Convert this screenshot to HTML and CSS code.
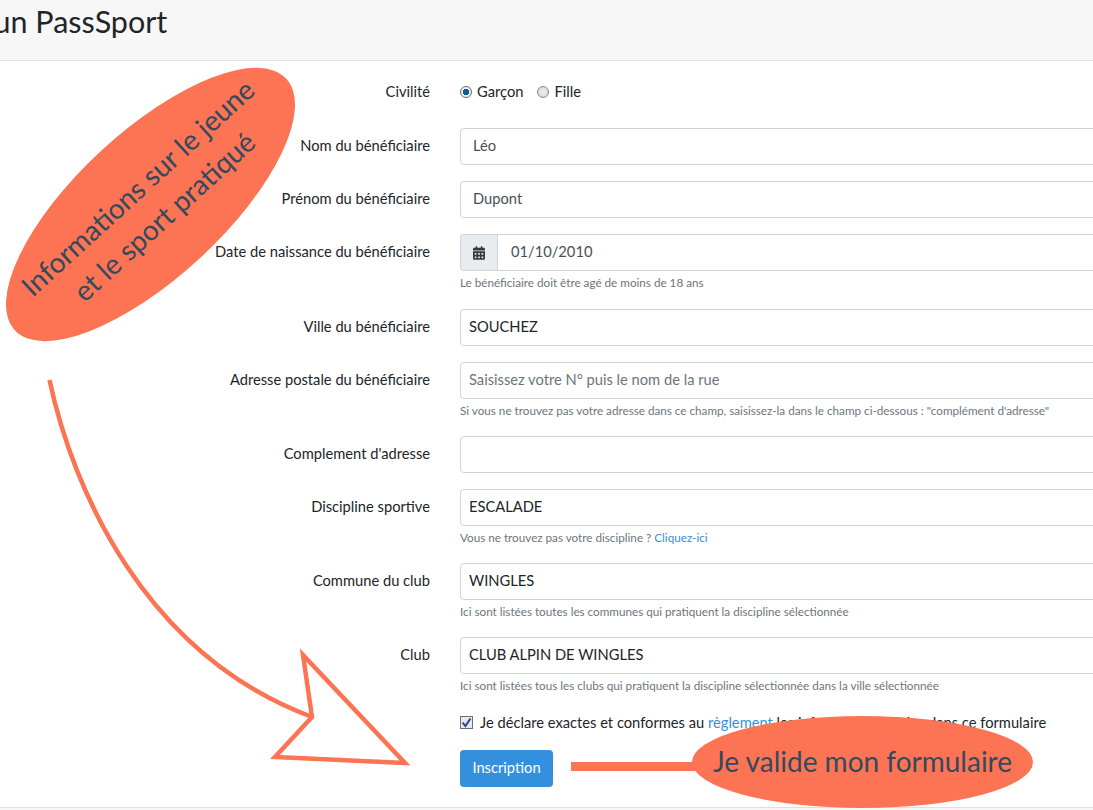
FILE: index.html
```html
<!DOCTYPE html>
<html lang="fr">
<head>
<meta charset="utf-8">
<title>un PassSport</title>
<link rel="stylesheet" href="styles.css">
</head>
<body>
<div class="card">
  <header class="card-header"><h1 class="title">un PassSport</h1></header>
  <form class="card-body">
    <div class="row radio-row">
      <label class="label">Civilité</label>
      <div class="field radios">
        <span class="radio-item"><input class="radio" type="radio" name="civ" checked><span>Garçon</span></span>
        <span class="radio-item"><input class="radio" type="radio" name="civ"><span>Fille</span></span>
      </div>
    </div>
    <div class="row"><label class="label">Nom du bénéficiaire</label><div class="field"><div class="control pad-lg">Léo</div></div></div>
    <div class="row"><label class="label">Prénom du bénéficiaire</label><div class="field"><div class="control pad-lg">Dupont</div></div></div>
    <div class="row">
      <label class="label">Date de naissance du bénéficiaire</label>
      <div class="field">
        <div class="group">
          <span class="addon"><svg class="cal" viewBox="0 0 448 512"><path d="M0 464c0 26.500 21.500 48 48 48h352c26.500 0 48-21.500 48-48V192H0v272zm320-196c0-6.600 5.400-12 12-12h40c6.600 0 12 5.400 12 12v40c0 6.600-5.400 12-12 12h-40c-6.600 0-12-5.400-12-12v-40zm0 128c0-6.600 5.400-12 12-12h40c6.600 0 12 5.400 12 12v40c0 6.600-5.400 12-12 12h-40c-6.600 0-12-5.400-12-12v-40zM192 268c0-6.600 5.400-12 12-12h40c6.600 0 12 5.400 12 12v40c0 6.600-5.400 12-12 12h-40c-6.600 0-12-5.400-12-12v-40zm0 128c0-6.600 5.400-12 12-12h40c6.600 0 12 5.400 12 12v40c0 6.600-5.400 12-12 12h-40c-6.600 0-12-5.400-12-12v-40zM64 268c0-6.600 5.400-12 12-12h40c6.600 0 12 5.400 12 12v40c0 6.600-5.400 12-12 12H76c-6.600 0-12-5.400-12-12v-40zm0 128c0-6.600 5.400-12 12-12h40c6.600 0 12 5.400 12 12v40c0 6.600-5.400 12-12 12H76c-6.600 0-12-5.400-12-12v-40zM400 64h-48V16c0-8.800-7.200-16-16-16h-32c-8.800 0-16 7.200-16 16v48H160V16c0-8.800-7.200-16-16-16h-32c-8.800 0-16 7.200-16 16v48H48C21.500 64 0 85.500 0 112v48h448v-48c0-26.500-21.500-48-48-48z"/></svg></span>
          <div class="control group-control">01/10/2010</div>
        </div>
        <small class="hint">Le bénéficiaire doit être agé de moins de 18 ans</small>
      </div>
    </div>
    <div class="row"><label class="label">Ville du bénéficiaire</label><div class="field"><div class="control dark">SOUCHEZ</div></div></div>
    <div class="row">
      <label class="label">Adresse postale du bénéficiaire</label>
      <div class="field">
        <div class="control placeholder">Saisissez votre N° puis le nom de la rue</div>
        <small class="hint">Si vous ne trouvez pas votre adresse dans ce champ, saisissez-la dans le champ ci-dessous : "complément d'adresse"</small>
      </div>
    </div>
    <div class="row"><label class="label">Complement d'adresse</label><div class="field"><div class="control"></div></div></div>
    <div class="row">
      <label class="label">Discipline sportive</label>
      <div class="field">
        <div class="control dark">ESCALADE</div>
        <small class="hint">Vous ne trouvez pas votre discipline ? <a class="link" href="#">Cliquez-ici</a></small>
      </div>
    </div>
    <div class="row">
      <label class="label">Commune du club</label>
      <div class="field">
        <div class="control dark">WINGLES</div>
        <small class="hint">Ici sont listées toutes les communes qui pratiquent la discipline sélectionnée</small>
      </div>
    </div>
    <div class="row">
      <label class="label">Club</label>
      <div class="field">
        <div class="control dark">CLUB ALPIN DE WINGLES</div>
        <small class="hint">Ici sont listées tous les clubs qui pratiquent la discipline sélectionnée dans la ville sélectionnée</small>
      </div>
    </div>
    <div class="row check-row">
      <span class="label"></span>
      <div class="field check-field">
        <span class="check"><svg viewBox="0 0 10 10"><path d="M1.500 5.200 4 8.200 8.600 1.400" /></svg></span>
        <span>Je déclare exactes et conformes au <a class="link" href="#">règlement</a> les informations saisies dans ce formulaire</span>
      </div>
    </div>
    <div class="row submit-row">
      <span class="label"></span>
      <div class="field"><button class="btn" type="button">Inscription</button></div>
    </div>
  </form>
  <footer class="card-footer"></footer>
</div>

<svg class="annotations" viewBox="0 0 1093 810" width="1093" height="810">
  <g class="ink">
    <ellipse cx="150.500" cy="204.500" rx="185" ry="73" transform="rotate(-42.800 150.500 204.500)"/>
    <ellipse cx="862.500" cy="762" rx="170.500" ry="46"/>
    <rect x="571" y="762" width="125" height="9"/>
  </g>
  <g class="stroke">
    <path d="M49.500 380C73 490 145 655 312 717"/>
    <path d="M303 655 312 717 275 757 405 763Z"/>
  </g>
  <g transform="rotate(-42.500 150 204)">
    <text class="note" x="152" y="194" text-anchor="middle">Informations sur le jeune</text>
    <text class="note" x="152" y="233" text-anchor="middle">et le sport pratiqué</text>
  </g>
  <text class="note2" x="862.500" y="772" text-anchor="middle">Je valide mon formulaire</text>
</svg>
</body>
</html>
```
FILE: styles.css
```css
* { box-sizing: border-box; }
html, body { margin: 0; height: 810px; overflow: hidden; background: #fff; }
body {
  font-family: Lato, "Noto Sans", sans-serif;
  font-size: 14.700px;
  color: #212529;
  position: relative;
}
.card { width: 1500px; }
.card-header {
  height: 61px;
  background: #f7f7f7;
  border-bottom: 1px solid #dfdfdf;
}
.title { margin: 0 0 0 -6.500px; font-size: 30.500px; line-height: 43px; font-weight: 400; color: #212529; }
.card-body { padding-top: 17px; }
.row { display: flex; margin-bottom: 16px; }
.label { width: 430px; text-align: right; line-height: 34px; height: 34px; flex: none; }
.field { margin-left: 30px; flex: 1; min-width: 0; }
.radio-row { height: 34.250px; margin-bottom: 16px; }
.radio-row .label { line-height: 27px; height: 27px; }
.radios { display: flex; gap: 14px; line-height: 27px; height: 27px; }
.radio-item { display: flex; align-items: center; gap: 5px; }
.radio {
  appearance: none;
  margin: 0;
  width: 12px;
  height: 12px;
  border-radius: 50%;
  border: 1px solid #8a8a8a;
  background: radial-gradient(circle at 50% 50%, #eee 0, #d5d5d5 100%);
}
.radio:checked {
  border-color: #5c6b7a;
  background: radial-gradient(circle at 50% 50%, #0c5f93 0, #0c5f93 3px, #f2f2f2 3.500px);
}
.control {
  height: 37px;
  border: 1px solid #ced4da;
  border-radius: 4px;
  background: #fff;
  padding: 0 8px;
  line-height: 33px;
  color: #495057;
}
.pad-lg { padding-left: 12px; }
.dark { color: #212529; }
.placeholder { color: #6c757d; }
.group { display: flex; }
.addon {
  flex: none;
  width: 37px;
  height: 37px;
  background: #e9ecef;
  border: 1px solid #ced4da;
  border-right: 0;
  border-radius: 4px 0 0 4px;
  display: flex;
  align-items: center;
  justify-content: center;
}
.cal { width: 12px; height: 14px; fill: #343a40; }
.group-control { flex: 1; border-radius: 0 4px 4px 0; padding-left: 13px; }
.hint { display: block; margin-top: 3px; font-size: 11.700px; line-height: 17.300px; height: 18.300px; color: #6c757d; }
.link { color: #3490dc; text-decoration: none; }
.check-row { margin-bottom: 17px; line-height: 21px; height: 21px; }
.check-row .label { height: 21px; }
.check-field { display: flex; align-items: center; gap: 7px; }
.check {
  width: 13px;
  height: 13px;
  border: 1px solid #6f6f6f;
  background: #e8e8ee;
  display: flex;
  flex: none;
}
.check svg { width: 100%; height: 100%; fill: none; stroke: #33408f; stroke-width: 1.800; }
.submit-row { margin-bottom: 20px; }
.btn {
  width: 93px;
  height: 37px;
  border: 0;
  border-radius: 4px;
  background: #3490dc;
  color: #fff;
  font: inherit;
  padding: 0 0 2px;
}
.card-footer { height: 10px; background: #f7f7f7; border-top: 1px solid #dfdfdf; }
.annotations { position: absolute; left: 0; top: 0; pointer-events: none; }
.ink { fill: #fc7453; }
.stroke { fill: none; stroke: #fc7453; stroke-width: 4.500; stroke-linejoin: miter; }
.note { font-family: Lato, sans-serif; font-size: 28px; fill: #34495e; }
.note2 { font-family: Lato, sans-serif; font-size: 28px; fill: #34495e; }
```
